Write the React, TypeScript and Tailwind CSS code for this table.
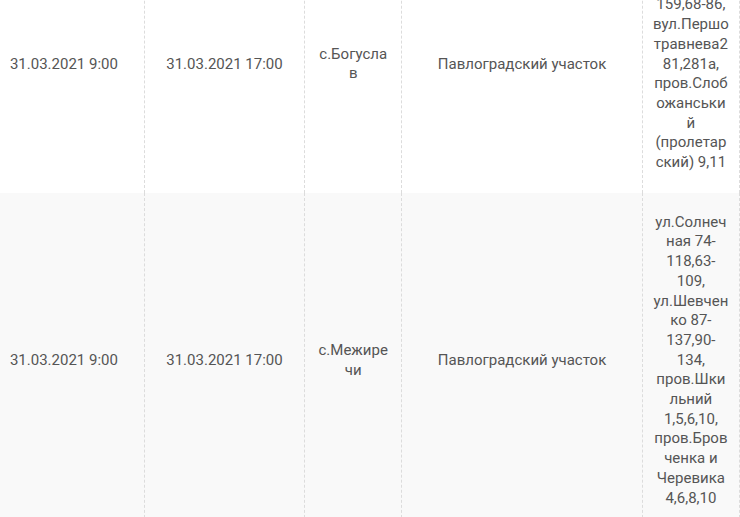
import React from 'react'

interface Outage {
  start: string
  end: string
  place: string
  area: string
  address: string
}

const rows: Outage[] = [
  {
    start: '31.03.2021 9:00',
    end: '31.03.2021 17:00',
    place: 'с.Богуслав',
    area: 'Павлоградский участок',
    address: 'вул.Сонячна 1-159,68-86, вул.Першотравнева281,281а, пров.Слобожанський (пролетарский) 9,11',
  },
  {
    start: '31.03.2021 9:00',
    end: '31.03.2021 17:00',
    place: 'с.Межиречи',
    area: 'Павлоградский участок',
    address:
      'ул.Солнечная 74-118,63-109, ул.Шевченко 87-137,90-134, пров.Шкильний 1,5,6,10, пров.Бровченка и Черевика 4,6,8,10',
  },
]

export default function App() {
  return (
    <div className="w-[740px] h-[517px] overflow-hidden bg-white font-['Roboto','Liberation_Sans',sans-serif]">
      {/* таблица прокручена, первая строка уходит вверх */}
      <table className="table-fixed border-collapse -mt-[64px] -ml-[16px] w-[756px] text-[15px] leading-[19.7px] text-[#555]">
        <colgroup>
          <col className="w-[160px]" />
          <col className="w-[160px]" />
          <col className="w-[97px]" />
          <col className="w-[240px]" />
          <col className="w-[97px]" />
        </colgroup>
        <tbody>
          {rows.map((r, i) => (
            <tr key={i} className={i % 2 === 1 ? 'bg-[#f9f9f9]' : 'bg-white'}>
              <td className="border-r border-dashed border-[#dcdcdc] px-[10px] py-5 text-center align-middle">
                {r.start}
              </td>
              <td className="border-r border-dashed border-[#dcdcdc] px-[10px] py-5 text-center align-middle">
                {r.end}
              </td>
              <td className="border-r border-dashed border-[#dcdcdc] px-[12px] py-5 text-center align-middle [overflow-wrap:anywhere]">
                {r.place}
              </td>
              <td className="border-r border-dashed border-[#dcdcdc] px-[10px] py-5 text-center align-middle">
                {r.area}
              </td>
              <td className="border-r border-dashed border-[#dcdcdc] px-[10px] py-5 text-center align-middle [overflow-wrap:anywhere]">
                {r.address}
              </td>
            </tr>
          ))}
        </tbody>
      </table>
    </div>
  )
}
